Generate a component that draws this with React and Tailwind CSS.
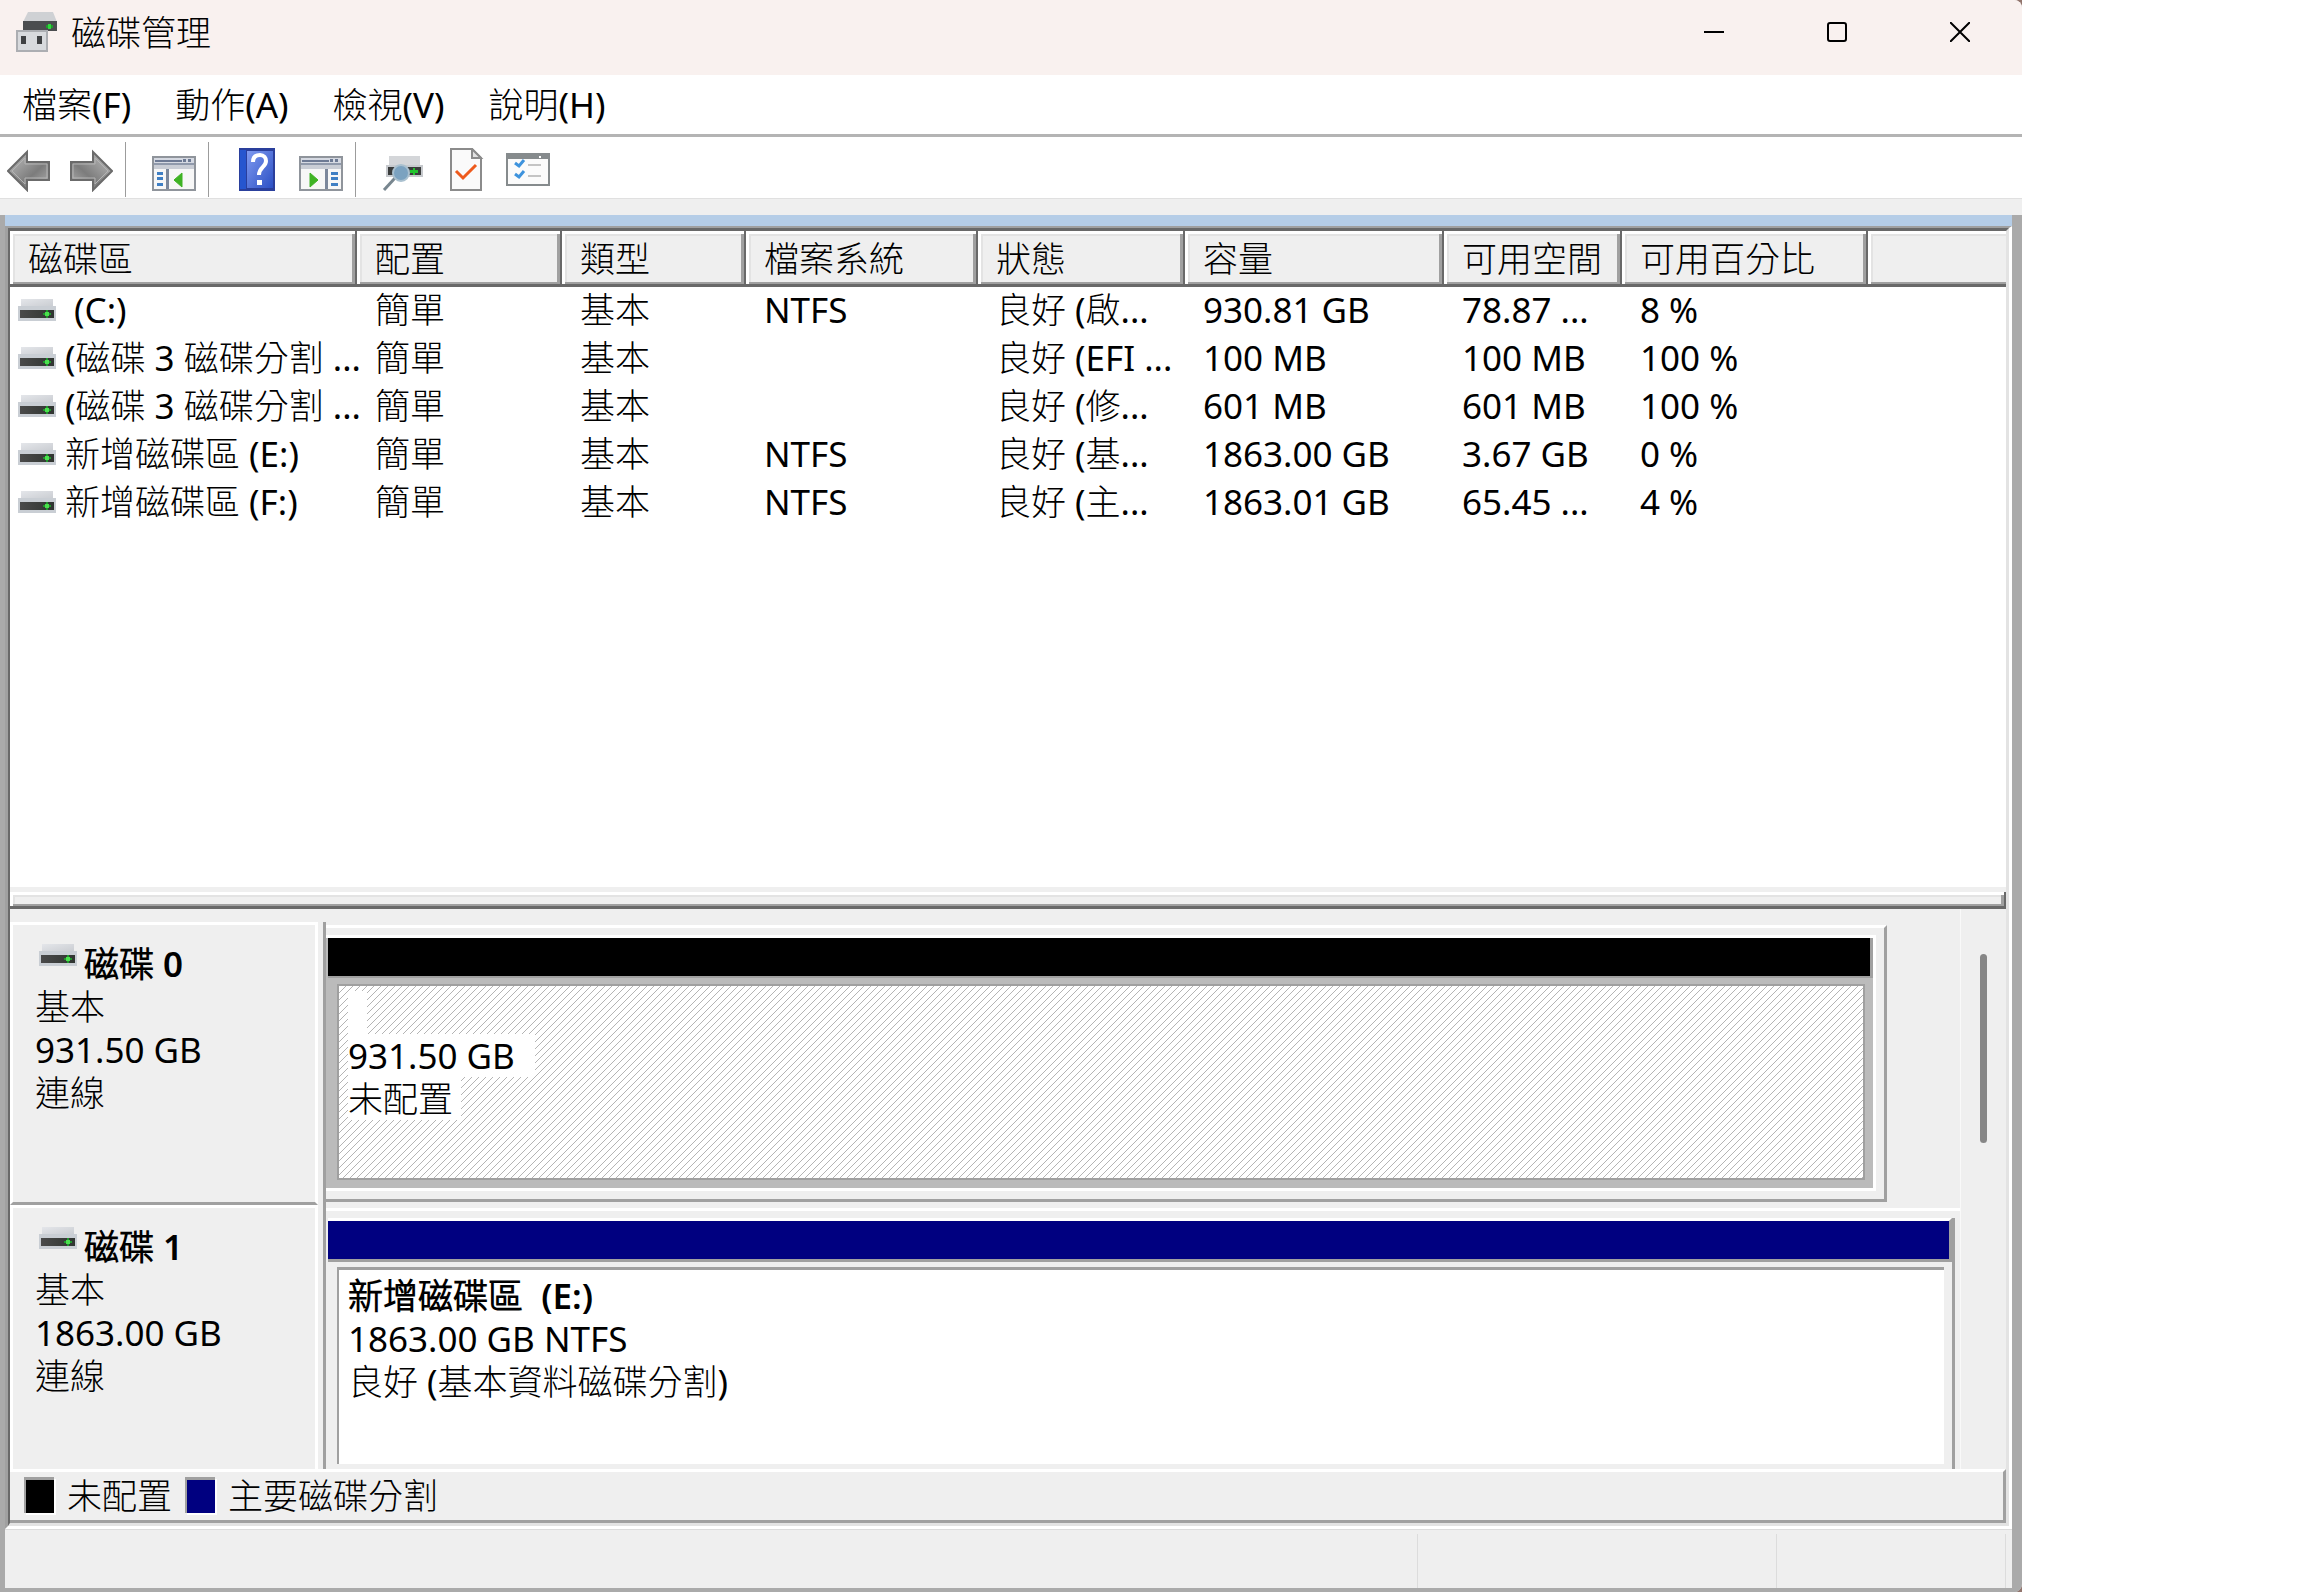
import { useState } from "react";

const columns = [
  { label: "磁碟區", width: 347 },
  { label: "配置", width: 205 },
  { label: "類型", width: 184 },
  { label: "檔案系統", width: 232 },
  { label: "狀態", width: 207 },
  { label: "容量", width: 259 },
  { label: "可用空間", width: 178 },
  { label: "可用百分比", width: 246 },
];

const volumes = [
  [" (C:)", "簡單", "基本", "NTFS", "良好 (啟...", "930.81 GB", "78.87 ...", "8 %"],
  ["(磁碟 3 磁碟分割 ...", "簡單", "基本", "", "良好 (EFI ...", "100 MB", "100 MB", "100 %"],
  ["(磁碟 3 磁碟分割 ...", "簡單", "基本", "", "良好 (修...", "601 MB", "601 MB", "100 %"],
  ["新增磁碟區 (E:)", "簡單", "基本", "NTFS", "良好 (基...", "1863.00 GB", "3.67 GB", "0 %"],
  ["新增磁碟區 (F:)", "簡單", "基本", "NTFS", "良好 (主...", "1863.01 GB", "65.45 ...", "4 %"],
];

const menus = ["檔案(F)", "動作(A)", "檢視(V)", "說明(H)"];

const raised =
  "shadow-[inset_-2px_-3px_0_#696969,inset_3px_3px_0_#fff,inset_-5px_-5px_0_#a0a0a0,inset_5px_5px_0_#e3e3e3]";

// last header cell runs on past the edge, so it has no right bevel
const raisedOpen =
  "shadow-[inset_0_-3px_0_#696969,inset_3px_3px_0_#fff,inset_0_-5px_0_#a0a0a0,inset_5px_5px_0_#e3e3e3]";

function DriveIcon() {
  return (
    <svg viewBox="0 0 38 22" className="h-[22px] w-[38px] shrink-0" aria-hidden="true">
      <defs>
        <linearGradient id="driveTop" x1="0" y1="0" x2="1" y2="1">
          <stop offset="0" stopColor="#e4e6ea" />
          <stop offset="1" stopColor="#c9ccd1" />
        </linearGradient>
        <linearGradient id="driveFront" x1="0" y1="0" x2="1" y2="0">
          <stop offset="0" stopColor="#4a4a4a" />
          <stop offset="1" stopColor="#303531" />
        </linearGradient>
      </defs>
      <path d="M3 0h32v8H3z" fill="url(#driveTop)" />
      <path d="M0 7h38v15H0z" fill="#c9ced4" />
      <path d="M2 11h34v8H2z" fill="url(#driveFront)" />
      <path d="M28 11h2v8h-2zM25 14h8v2h-8z" fill="#1f9a2c" />
      <path d="M27 13h4v4h-4z" fill="#4be04e" />
    </svg>
  );
}

function AppIcon() {
  return (
    <svg viewBox="0 0 42 40" className="h-10 w-[42px] shrink-0" aria-hidden="true">
      <path d="M12 0h25l4 10H7z" fill="#cfd1d4" />
      <path d="M7 9h34v10H7z" fill="#4b4d4f" />
      <path d="M30 13h7v3h-7z" fill="#1f9a2c" />
      <path d="M32 12h3v5h-3z" fill="#2fd83c" />
      <path d="M1 19h30v20H1z" fill="#d8dadd" stroke="#acaeb2" strokeWidth="2" />
      <path d="M5 24h5v8H5zM21 24h5v8h-5z" fill="#3f4143" />
    </svg>
  );
}

function ArrowIcon({ flip }) {
  return (
    <svg viewBox="0 0 44 44" className={flip ? "size-11 -scale-x-100" : "size-11"} aria-hidden="true">
      <defs>
        <linearGradient id="arrowFill" x1="0" y1="0" x2="1" y2="1">
          <stop offset="0" stopColor="#c4c4c4" />
          <stop offset="0.6" stopColor="#7c7c7c" />
          <stop offset="1" stopColor="#b5b5b5" />
        </linearGradient>
      </defs>
      <path d="M1 23 20 4v10h22v18H20v10z" fill="url(#arrowFill)" stroke="#6b6b6b" strokeWidth="2" />
      <path d="M5 23 18 10v6h22v14H18v6z" fill="none" stroke="#b4b4b4" strokeWidth="1" />
    </svg>
  );
}

function PaneIcon({ right }) {
  return (
    <svg viewBox="0 0 44 44" className="size-11" aria-hidden="true">
      <path d="M1 9h42v33H1z" fill="#f7f7f7" stroke="#8f949b" strokeWidth="2" />
      <path d="M2 10h40v5H2z" fill="#d5d9e2" />
      <path d="M3 12h27v2H3zM31 11h3v3h-3zM36 11h3v3h-3z" fill="#6d7a94" />
      <path d="M2 15h40v2H2z" fill="#8f99ab" />
      <path d="M2 17h40v4H2z" fill="#c9cdd5" />
      {right ? (
        <>
          <path d="M26 21h3v20h-3z" fill="#7b879b" />
          <path d="M32 24h7v3h-7zM32 29h7v3h-7zM32 35h7v3h-7z" fill="#3f7fc4" />
          <path d="M11 25v14l8-7z" fill="#3fb324" stroke="#3fb324" />
        </>
      ) : (
        <>
          <path d="M14 21h3v20h-3z" fill="#7b879b" />
          <path d="M5 24h6v3H5zM5 29h6v3H5zM5 35h6v3H5z" fill="#3f7fc4" />
          <path d="M30 25v14l-8-7z" fill="#3fb324" stroke="#3fb324" />
        </>
      )}
    </svg>
  );
}

function HelpIcon() {
  return (
    <svg viewBox="0 0 44 44" className="size-11" aria-hidden="true">
      <defs>
        <linearGradient id="helpFill" x1="0" y1="0" x2="1" y2="1">
          <stop offset="0" stopColor="#7f9af0" />
          <stop offset="1" stopColor="#2c50c4" />
        </linearGradient>
      </defs>
      <path d="M4 0h36v43H4z" fill="#2a3f9c" />
      <path d="M5 2h6v39H5z" fill="#2656cf" />
      <path d="M12 3h26v37H12z" fill="url(#helpFill)" />
      <path d="M18 14c0-5 3-7 7-7s6 3 6 6c0 6-7 6-7 14" fill="none" stroke="#fff" strokeWidth="4" />
      <path d="M22 32h5v5h-5z" fill="#fff" />
    </svg>
  );
}

function RescanIcon() {
  return (
    <svg viewBox="0 0 44 44" className="size-11" aria-hidden="true">
      <path d="M7 8h31v10H7z" fill="#d4d6d9" />
      <path d="M4 17h37v12H4z" fill="#c6c9cd" />
      <path d="M6 19h33v8H6z" fill="#3a3c3c" />
      <path d="M31 20h2v7h-2zM28 22h8v3h-8z" fill="#22c42e" />
      <path d="M13 30 2 42" stroke="#78868f" strokeWidth="3" />
      <circle cx="19" cy="25" r="8" fill="#7ba2c0" stroke="#a9c0cf" strokeWidth="2" />
    </svg>
  );
}

function CheckPageIcon() {
  return (
    <svg viewBox="0 0 44 44" className="size-11" aria-hidden="true">
      <path d="M7 1h21l9 9v32H7z" fill="#fafafa" stroke="#8b8b8b" strokeWidth="2" />
      <path d="M28 1v9h9z" fill="#e2e2e2" stroke="#8b8b8b" strokeWidth="2" />
      <path d="m12 23 7 7 13-13" fill="none" stroke="#ee5a1c" strokeWidth="3" />
    </svg>
  );
}

function OptionsIcon() {
  return (
    <svg viewBox="0 0 44 44" className="size-11" aria-hidden="true">
      <path d="M1 6h42v31H1z" fill="#fbfbfb" stroke="#868b8d" strokeWidth="2" />
      <path d="M0 5h44v6H0z" fill="#868b8d" />
      <path d="M33 8h2v2h-2z" fill="#fff" />
      <path d="m9 15 4 3 5-6M9 26l4 3 5-6" fill="none" stroke="#3e93dd" strokeWidth="3" />
      <path d="M22 16h13v2H22zM22 27h13v2H22z" fill="#c4c4c4" />
    </svg>
  );
}

function ToolButton({ label, children }) {
  return (
    <button type="button" aria-label={label} className="size-11 shrink-0">
      {children}
    </button>
  );
}

function Separator() {
  return <div className="mr-[26px] ml-3 h-[55px] w-px shrink-0 bg-[#9c9c9c]" />;
}

function TitleBar() {
  return (
    <header className="flex h-[75px] items-start bg-[#f9f1ef]">
      <div className="flex h-16 flex-1 items-center gap-[13px] pl-4">
        <AppIcon />
        <h1>磁碟管理</h1>
      </div>
      <button type="button" aria-label="最小化" className="grid h-16 w-[123px] place-items-center">
        <svg viewBox="0 0 20 20" className="size-5" stroke="#000" strokeWidth="2">
          <path d="M0 10h20" />
        </svg>
      </button>
      <button type="button" aria-label="最大化" className="grid h-16 w-[123px] place-items-center">
        <svg viewBox="0 0 20 20" className="size-5" fill="none" stroke="#000" strokeWidth="2">
          <rect x="1" y="1" width="18" height="18" rx="2" />
        </svg>
      </button>
      <button type="button" aria-label="關閉" className="grid h-16 w-[124px] place-items-center">
        <svg viewBox="0 0 20 20" className="size-5" stroke="#000" strokeWidth="2">
          <path d="m0 0 20 20M20 0 0 20" />
        </svg>
      </button>
    </header>
  );
}

function VolumeTable({ selected, onSelect }) {
  return (
    <table className="w-full table-fixed text-left whitespace-pre">
      <colgroup>
        {columns.map((c) => (
          <col key={c.label} style={{ width: c.width }} />
        ))}
        <col />
      </colgroup>
      <thead>
        <tr className="h-14 bg-[#efefef]">
          {columns.map((c) => (
            <th key={c.label} scope="col" className={`${raised} pb-[2px] pl-[18px] font-normal`}>
              {c.label}
            </th>
          ))}
          <td className={raisedOpen} />
        </tr>
      </thead>
      <tbody>
        {volumes.map((row, i) => (
          <tr key={i} className="h-12" aria-selected={selected === i} onClick={() => onSelect(i)}>
            {row.map((cell, j) =>
              j === 0 ? (
                <td key={j} className="pb-[3px] pl-2">
                  <div className="flex items-center gap-[9px]">
                    <DriveIcon />
                    {cell}
                  </div>
                </td>
              ) : (
                <td key={j} className="pb-[3px] pl-[18px]">
                  {cell}
                </td>
              )
            )}
            <td />
          </tr>
        ))}
      </tbody>
    </table>
  );
}

function DiskLabel({ name, size }) {
  return (
    <div className="flex w-[316px] shrink-0 border-r-[3px] border-[#a0a0a0]">
      <div className="flex-1 border-[3px] border-t-white border-r-white border-b-[#a0a0a0] border-l-white pt-[17px] pl-[22px]">
        <div className="flex gap-[7px] pl-1 font-semibold">
          <div className="pt-[2px]">
            <DriveIcon />
          </div>
          <h2>{name}</h2>
        </div>
        <p>基本</p>
        <p>{size}</p>
        <p>連線</p>
      </div>
      <div className="w-[5px]" />
    </div>
  );
}

function App() {
  const [selected, setSelected] = useState(null);

  return (
    <div className="min-h-screen bg-white pr-[282px] font-['Noto_Sans','Noto_Sans_CJK_TC_Light','Noto_Sans_CJK_TC_DemiLight','Noto_Sans_CJK_TC',sans-serif] text-[35px] leading-[43px] text-black">
      <div className="flex min-h-screen flex-col bg-[#92756d]">
        <div className="flex flex-1 flex-col overflow-hidden rounded-r-lg bg-[#efefef]">
          <TitleBar />

          <nav className="flex h-[62px] items-center gap-11 border-b-[3px] border-[#b4b4b4] bg-white pl-[22px]">
            {menus.map((m) => (
              <button key={m} type="button">
                {m}
              </button>
            ))}
          </nav>

          <div className="mb-4 flex h-[62px] items-center border-b border-[#e0e0e0] bg-white pt-1 pl-[7px]">
            <div className="flex gap-[18px]">
              <ToolButton label="上一頁">
                <ArrowIcon />
              </ToolButton>
              <ToolButton label="下一頁">
                <ArrowIcon flip />
              </ToolButton>
            </div>
            <Separator />
            <ToolButton label="顯示或隱藏主控台樹狀目錄">
              <PaneIcon />
            </ToolButton>
            <Separator />
            <div className="flex gap-5">
              <ToolButton label="說明">
                <HelpIcon />
              </ToolButton>
              <ToolButton label="顯示或隱藏執行窗格">
                <PaneIcon right />
              </ToolButton>
            </div>
            <Separator />
            <div className="flex gap-[18px]">
              <ToolButton label="重新掃描磁碟">
                <RescanIcon />
              </ToolButton>
              <ToolButton label="內容">
                <CheckPageIcon />
              </ToolButton>
              <ToolButton label="設定">
                <OptionsIcon />
              </ToolButton>
            </div>
          </div>

          <div className="flex flex-1 flex-col border-r-[10px] border-b-4 border-l-[5px] border-[#aaaaaa]">
            <div className="h-[11px] bg-[#b5cde7]" />

            <main className="flex flex-1 flex-col border-t-2 border-r-[3px] border-b-[3px] border-l-[3px] border-t-[#a0a0a0] border-r-white border-b-white border-l-[#a0a0a0]">
              <div className="flex flex-1 flex-col border-t-[3px] border-r-[3px] border-b-[3px] border-l-2 border-t-[#696969] border-r-[#e3e3e3] border-b-[#e3e3e3] border-l-[#696969]">
                <section className="flex-1 bg-white" aria-label="磁碟區清單">
                  <VolumeTable selected={selected} onSelect={setSelected} />
                </section>

                <div className="pt-[5px]">
                  <div className={`${raised} h-[17px]`} />
                </div>

                <section className="flex h-[560px] overflow-hidden" aria-label="磁碟圖形檢視">
                  <div className="flex-1 pt-[13px]">
                    <div className="flex h-[283px]">
                      <DiskLabel name="磁碟 0" size="931.50 GB" />
                      <div className="flex-1 py-[3px]">
                        <div className="mr-[73px] h-full border-t-[3px] border-r-[3px] border-b-[3px] border-t-white border-r-[#a0a0a0] border-b-[#a0a0a0] pt-[7px] pr-2 pb-2">
                          <div className="flex h-full flex-col border-t-[3px] border-r-[3px] border-b-[3px] border-white bg-[#bbbbbb]">
                            <div className="ml-[2px] h-10 border-r-[3px] border-b-2 border-[#a0a0a0] bg-black" />
                            <div className="mt-[6px] mr-2 mb-2 ml-[11px] flex-1 border-2 border-[#a0a0a0] bg-white bg-[linear-gradient(135deg,transparent_45%,#b4b4b4_45%,#b4b4b4_55%,transparent_55%)] bg-[length:7px_7px] pt-[5px] pl-[9px]">
                              <div className="h-[43px] w-[19px] bg-white" />
                              <p className="w-fit bg-white pr-5">931.50 GB</p>
                              <p className="w-fit bg-white pr-2">未配置</p>
                            </div>
                          </div>
                        </div>
                      </div>
                    </div>

                    <div className="flex h-[284px]">
                      <DiskLabel name="磁碟 1" size="1863.00 GB" />
                      <div className="flex-1 pt-[3px]">
                        <div className="h-full border-t-[3px] border-white pt-[7px] pr-[5px]">
                          <div className="h-full border-r-[3px] border-[#a0a0a0]">
                            <div className="ml-[2px] h-11 border-t-[3px] border-r-[3px] border-b-[3px] border-t-white border-r-[#a0a0a0] border-b-[#a0a0a0] bg-[#000080]" />
                            <div className="mt-[5px] mr-[8px] ml-[11px] h-[197px] border-t-[3px] border-l-2 border-[#a0a0a0] bg-white pt-1 pl-[9px]">
                              <p className="font-semibold whitespace-pre">新增磁碟區  (E:)</p>
                              <p>1863.00 GB NTFS</p>
                              <p>良好 (基本資料磁碟分割)</p>
                            </div>
                          </div>
                        </div>
                      </div>
                    </div>
                  </div>
                  <div className="w-[46px] border-l border-[#f9f9f9] pt-[45px] pl-[19px]">
                    <div className="h-[189px] w-[7px] rounded-full bg-[#868686]" />
                  </div>
                </section>

                <footer className="flex h-[54px] items-center gap-[13px] border-t-[3px] border-r-[3px] border-b-[3px] border-t-white border-r-[#a0a0a0] border-b-[#a0a0a0] pb-[2px] pl-[14px]">
                  <span className="h-9 w-[30px] border-t-[3px] border-l-2 border-[#a0a0a0] bg-black shadow-[2px_2px_0_#fff]" />
                  <span>未配置</span>
                  <span className="h-9 w-[30px] border-t-[3px] border-l-2 border-[#a0a0a0] bg-[#000080] shadow-[2px_2px_0_#fff]" />
                  <span>主要磁碟分割</span>
                </footer>
              </div>
            </main>

            <div className="flex h-[59px] border-t border-[#dcdcdc] pt-1 pr-[6px]">
              <div className="flex-1 border-r border-[#dcdcdc]" />
              <div className="w-[359px] border-r border-[#dcdcdc]" />
              <div className="w-[229px] border-r border-[#dcdcdc]" />
            </div>
          </div>
        </div>
      </div>
    </div>
  );
}

export default App;
